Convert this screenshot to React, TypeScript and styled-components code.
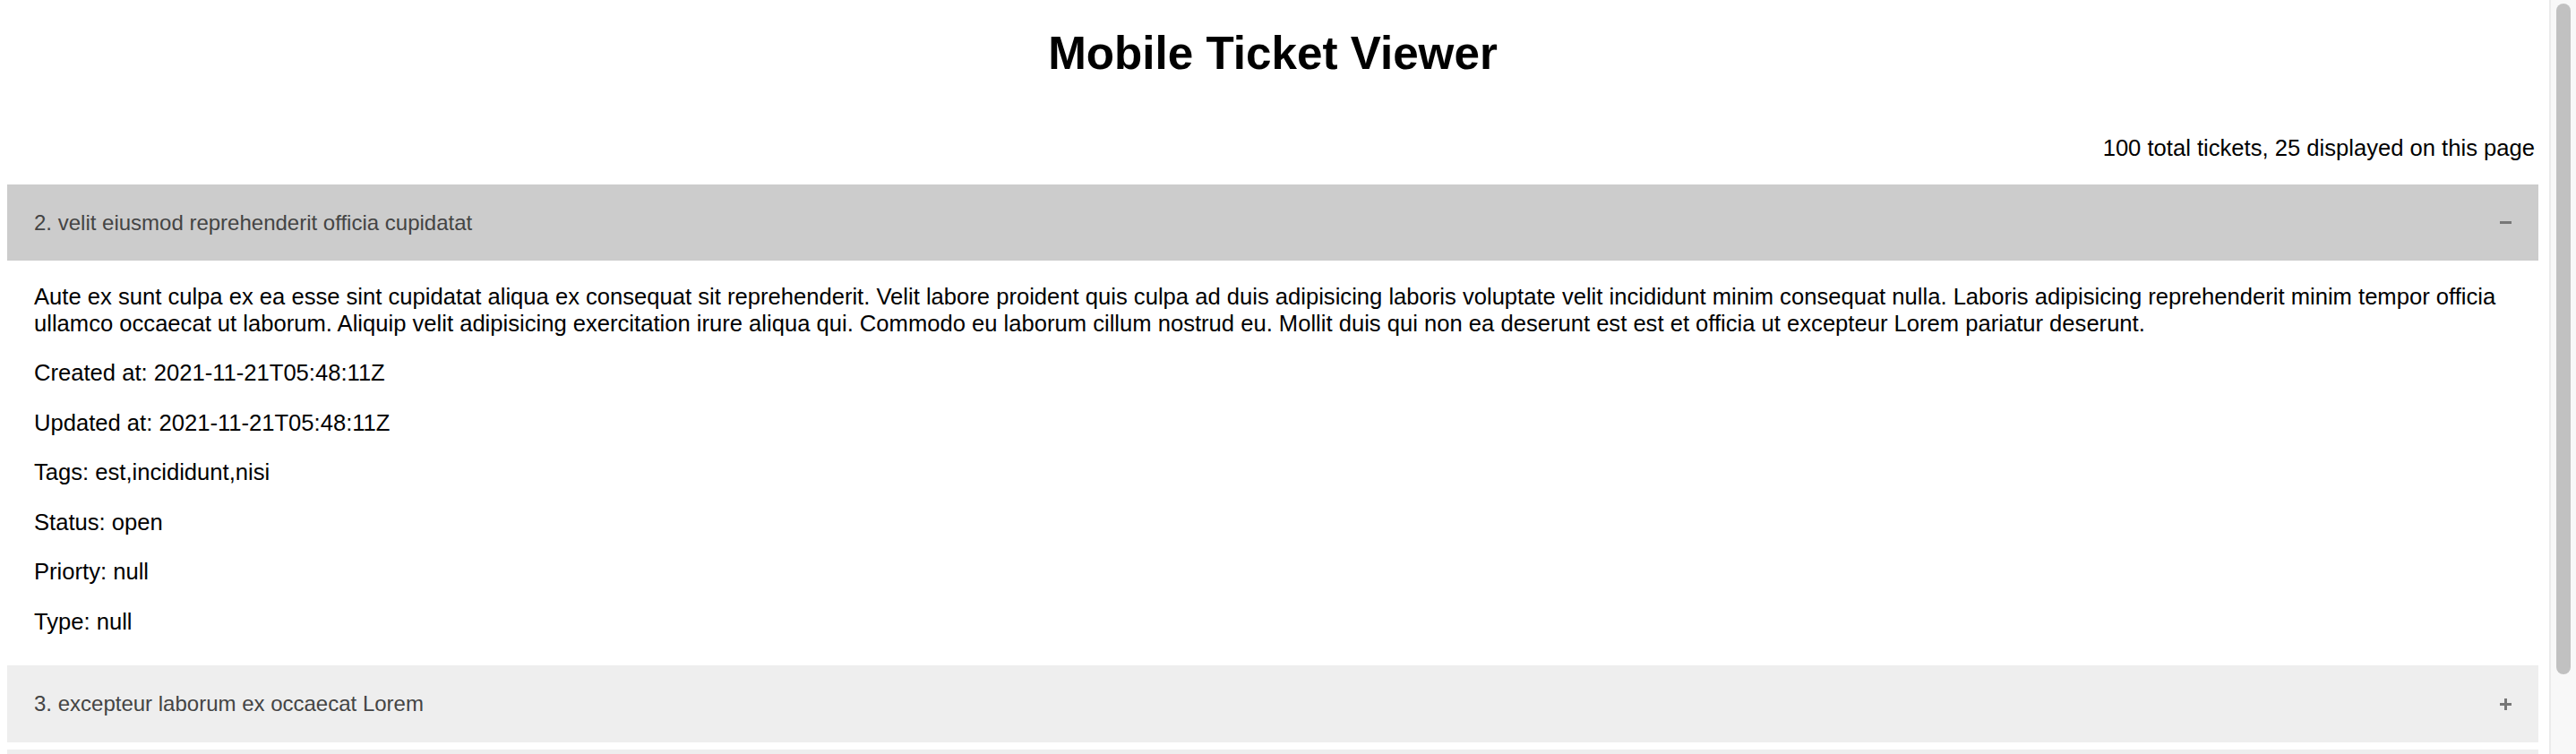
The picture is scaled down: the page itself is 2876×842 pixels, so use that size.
import { useState } from "react";
import styled, { createGlobalStyle } from "styled-components";

interface Ticket {
  id: number;
  subject: string;
  description: string;
  created_at: string;
  updated_at: string;
  tags: string[];
  status: string;
  priority: string | null;
  type: string | null;
}

const GlobalStyle = createGlobalStyle`
  body {
    margin: 0;
    background: #fff;
    color: #000;
    font-family: "Liberation Sans", Arial, Helvetica, sans-serif;
  }
`;

const Shell = styled.div`
  display: flex;
  height: 100vh;
  overflow: hidden;
`;

const Main = styled.main`
  flex: 1 1 auto;
  min-width: 0;
  overflow-y: auto;
  scrollbar-width: none;
  &::-webkit-scrollbar {
    display: none;
  }
`;

const ScrollTrack = styled.div`
  flex: 0 0 30px;
  box-sizing: border-box;
  padding: 4px 6px 0;
  background: #f8f8f8;
  border-left: 2px solid #ebebeb;
`;

const ScrollThumb = styled.div`
  height: 749px;
  border-radius: 8px;
  background: #c1c1c1;
`;

const Page = styled.div`
  padding: 0 12px 11px 8px;
`;

const Title = styled.h1`
  margin: 31px 0 0;
  font-size: 51.2px;
  line-height: 1.15;
  font-weight: 700;
  text-align: center;
`;

const Summary = styled.p`
  margin: 61px 0 0;
  padding-right: 4px;
  font-size: 25.6px;
  line-height: 1.15;
  text-align: right;
`;

const List = styled.div`
  margin-top: 25.6px;
`;

const Item = styled.div`
  margin-bottom: 8px;
`;

const ItemHeader = styled.div<{ $open: boolean }>`
  display: flex;
  align-items: center;
  justify-content: space-between;
  padding: 29px 30px;
  background: ${(props) => (props.$open ? "#cccccc" : "#eeeeee")};
  color: #444;
  font-size: 24px;
  line-height: 27.6px;
  cursor: pointer;
`;

const ToggleIcon = styled.svg`
  width: 13px;
  height: 13px;
  flex: 0 0 auto;
  color: #777;
`;

const Panel = styled.div`
  display: flow-root;
  padding: 0 30px;
  font-size: 25.6px;
  line-height: 29.9px;
`;

const Field = styled.p`
  margin: 25.6px 0;
`;

const tickets: Ticket[] = [
  {
    id: 2,
    subject: "velit eiusmod reprehenderit officia cupidatat",
    description:
      "Aute ex sunt culpa ex ea esse sint cupidatat aliqua ex consequat sit reprehenderit. Velit labore proident quis culpa ad duis adipisicing laboris voluptate velit incididunt minim consequat nulla. Laboris adipisicing reprehenderit minim tempor officia ullamco occaecat ut laborum. Aliquip velit adipisicing exercitation irure aliqua qui. Commodo eu laborum cillum nostrud eu. Mollit duis qui non ea deserunt est est et officia ut excepteur Lorem pariatur deserunt.",
    created_at: "2021-11-21T05:48:11Z",
    updated_at: "2021-11-21T05:48:11Z",
    tags: ["est", "incididunt", "nisi"],
    status: "open",
    priority: null,
    type: null,
  },
  {
    id: 3,
    subject: "excepteur laborum ex occaecat Lorem",
    description:
      "Exercitation amet ullamco ex esse tempor. Consequat laborum fugiat pariatur aliqua nostrud proident ut.",
    created_at: "2021-11-21T05:48:13Z",
    updated_at: "2021-11-21T05:48:13Z",
    tags: ["amet", "labore", "velit"],
    status: "open",
    priority: null,
    type: null,
  },
  {
    id: 4,
    subject: "ad sunt qui aute ullamco officia",
    description:
      "Lorem commodo minim laboris nostrud cupidatat. Duis irure elit ea proident incididunt do consequat.",
    created_at: "2021-11-21T05:48:15Z",
    updated_at: "2021-11-21T05:48:15Z",
    tags: ["sunt", "esse", "magna"],
    status: "open",
    priority: null,
    type: null,
  },
];

function Toggle({ open }: { open: boolean }) {
  return (
    <ToggleIcon viewBox="0 0 13 13" fill="currentColor">
      <rect x="0" y="5" width="13" height="3" />
      {!open && <rect x="5" y="0" width="3" height="13" />}
    </ToggleIcon>
  );
}

function TicketItem({ ticket, open, onToggle }: { ticket: Ticket; open: boolean; onToggle: () => void }) {
  return (
    <Item>
      <ItemHeader $open={open} onClick={onToggle}>
        <span>
          {ticket.id}. {ticket.subject}
        </span>
        <Toggle open={open} />
      </ItemHeader>
      {open && (
        <Panel>
          <Field>{ticket.description}</Field>
          <Field>Created at: {ticket.created_at}</Field>
          <Field>Updated at: {ticket.updated_at}</Field>
          <Field>Tags: {ticket.tags.join(",")}</Field>
          <Field>Status: {ticket.status}</Field>
          <Field>Priorty: {String(ticket.priority)}</Field>
          <Field>Type: {String(ticket.type)}</Field>
        </Panel>
      )}
    </Item>
  );
}

export default function App() {
  const [openId, setOpenId] = useState<number | null>(2);
  return (
    <>
      <GlobalStyle />
      <Shell>
        <Main>
          <Page>
            <Title>Mobile Ticket Viewer</Title>
            <Summary>100 total tickets, 25 displayed on this page</Summary>
            <List>
              {tickets.map((t) => (
                <TicketItem
                  key={t.id}
                  ticket={t}
                  open={openId === t.id}
                  onToggle={() => setOpenId(openId === t.id ? null : t.id)}
                />
              ))}
            </List>
          </Page>
        </Main>
        <ScrollTrack>
          <ScrollThumb />
        </ScrollTrack>
      </Shell>
    </>
  );
}
